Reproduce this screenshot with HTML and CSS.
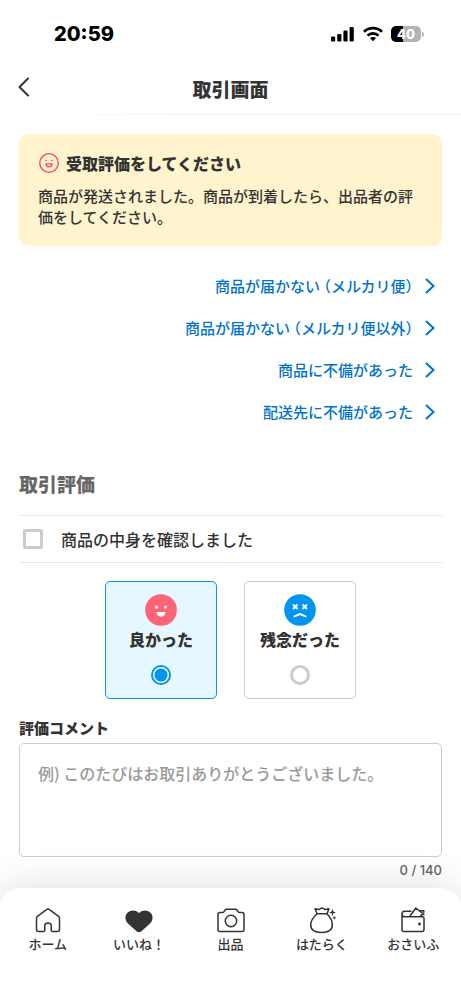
FILE: index.html
```html
<!DOCTYPE html>
<html lang="ja">
<head>
<meta charset="utf-8">
<meta name="viewport" content="width=device-width, initial-scale=1">
<title>取引画面</title>
<link rel="stylesheet" href="styles.css">
</head>
<body>
<div class="status">
  <span class="clock">20:59</span>
  <div class="status-icons">
    <svg width="24" height="16" viewBox="0 0 24 16" aria-hidden="true"><rect x="0" y="10.500" width="4.200" height="5" rx="1.200"/><rect x="6.200" y="8" width="4.200" height="7.500" rx="1.200"/><rect x="12.400" y="4.500" width="4.200" height="11" rx="1.200"/><rect x="18.600" y="1" width="4.200" height="14.500" rx="1.200"/></svg>
    <svg width="20" height="16" viewBox="0 0 20 16" fill="none" stroke="#000" stroke-width="2.700" aria-hidden="true"><path d="M1 5.800C6 .9 14 .9 19 5.800"/><path d="M4.500 9.600C7.700 6.500 12.300 6.500 15.500 9.600"/><path d="M10 15.200 6.900 12C8.700 10.500 11.300 10.500 13.100 12Z" fill="#000" stroke="none"/></svg>
    <div class="battery"><span class="battery-level">40</span></div>
  </div>
</div>
<header class="header">
  <button class="back" aria-label="戻る"><svg width="12" height="20" viewBox="0 0 12 20" fill="none" stroke="#333" stroke-width="2" stroke-linecap="round" stroke-linejoin="round"><path d="M10 1.500 1.500 10l8.500 8.500"/></svg></button>
  <h1>取引画面</h1>
</header>
<main>
  <section class="notice">
    <h2>
      <svg width="22" height="22" viewBox="0 0 22 22" fill="none" stroke="#ff4156" aria-hidden="true"><circle cx="11" cy="11" r="9.300" stroke-width="1.300"/><path d="M8 8.500h.1M14 8.500h.1" stroke-width="1.600" stroke-linecap="round"/><path d="M8 11.800h6c0 4-6 4-6 0Z" stroke-width="1.300" stroke-linejoin="round"/></svg>
      受取評価をしてください
    </h2>
    <p>商品が発送されました。商品が到着したら、出品者の評価をしてください。</p>
  </section>
  <nav class="links" aria-label="お困りのとき">
    <a href="#">商品が届かない （メルカリ便）<svg class="chevron" viewBox="0 0 10 16"><path d="M1 1l7.500 7L1 15"/></svg></a>
    <a href="#">商品が届かない （メルカリ便以外）<svg class="chevron" viewBox="0 0 10 16"><path d="M1 1l7.500 7L1 15"/></svg></a>
    <a href="#">商品に不備があった<svg class="chevron" viewBox="0 0 10 16"><path d="M1 1l7.500 7L1 15"/></svg></a>
    <a href="#">配送先に不備があった<svg class="chevron" viewBox="0 0 10 16"><path d="M1 1l7.500 7L1 15"/></svg></a>
  </nav>
  <form>
    <h2 class="section-title">取引評価</h2>
    <label class="confirm"><input type="checkbox">商品の中身を確認しました</label>
    <div class="ratings">
      <label class="rating">
        <svg width="32" height="32" viewBox="0 0 32 32" aria-hidden="true"><circle cx="16" cy="16" r="15.800" fill="#ff6376"/><circle cx="11.500" cy="13.300" r="1.500" fill="#fff"/><circle cx="20.500" cy="13.300" r="1.500" fill="#fff"/><path d="M11.500 18h9c0 6.200-9 6.200-9 0Z" fill="#fff"/></svg>
        良かった
        <input type="radio" name="rating" value="good" checked>
      </label>
      <label class="rating">
        <svg width="32" height="32" viewBox="0 0 32 32" fill="none" stroke="#fff" stroke-width="2" aria-hidden="true"><circle cx="16" cy="16" r="15.800" fill="#0095ee" stroke="none"/><path d="M9 10.500l4.500 4.500m0-4.500L9 15M18.500 10.500 23 15m0-4.500L18.500 15"/><path d="M10.500 22.300 16 20l5.500 2.300" stroke-linecap="round" stroke-linejoin="round"/></svg>
        残念だった
        <input type="radio" name="rating" value="bad">
      </label>
    </div>
    <label class="comment-label" for="comment">評価コメント</label>
    <textarea id="comment" maxlength="140" placeholder="例) このたびはお取引ありがとうございました。"></textarea>
    <p class="counter">0 / 140</p>
  </form>
</main>
<nav class="tabs" aria-label="メイン">
  <a href="#"><svg viewBox="0 0 28 28"><path d="M4.500 25.500c-1 0-2-1-2-2V12.500c0-1 .4-1.700 1.200-2.300l8.800-6.500c1-.8 2-.8 3 0l8.800 6.500c.8.6 1.200 1.300 1.200 2.300v11c0 1-1 2-2 2h-5c-.8 0-1.300-.5-1.300-1.300V20c0-4-6.400-4-6.400 0v4.200c0 .8-.5 1.300-1.300 1.300Z"/></svg>ホーム</a>
  <a href="#"><svg viewBox="0 0 28 28"><path class="solid" d="M14 7C10 3 4.500 4.200 2 7.300C-.5 10.500.2 15 3 17.500L11.500 25.300Q14 27.300 16.500 25.300L25 17.500C27.800 15 28.500 10.500 26 7.300C23.500 4.200 18 3 14 7Z"/></svg>いいね！</a>
  <a href="#"><svg viewBox="0 0 28 28"><path d="M3 25.500c-1 0-2-1-2-2V8.500c0-1 .7-2 2-2h2.500c.6 0 1-.2 1.300-.7L8 4c.4-.6.8-.8 1.500-.8h9c.7 0 1.100.2 1.500.8l1.200 1.800c.3.500.7.700 1.300.7H25c1.300 0 2 1 2 2v15c0 1-1 2-2 2Z"/><circle cx="14" cy="15" r="5.700"/></svg>出品</a>
  <a href="#"><svg viewBox="0 0 28 28"><path d="M9 7.800 7 2.800l3.800.8L14 1.800l3.200 1.800 3.800-.8-2 5Z"/><path d="M9 7.800C5 11.500 2.700 15 2.700 18.800c0 5 4 7.700 10.800 7.700S24.300 23.800 24.300 18.800c0-3.800-2-7.500-5.300-11"/><path class="fill" d="M24.500 2.800l.9 2.700 2.600.9-2.600.9-.9 2.700-.9-2.700-2.600-.9 2.600-.9ZM26.300 9.800l.6 1.400 1.400.6-1.400.6-.6 1.400-.6-1.400-1.400-.6 1.400-.6Z"/></svg>はたらく</a>
  <a href="#"><svg viewBox="0 0 28 28"><path d="M12 5.200H5.500c-3.300 0-3.300 5.500 0 5.500h5M3 8v15.500c0 1 .8 2 2 2h18c1 0 2-.8 2-2V12.200c0-1-.5-1.500-1.500-1.500h-2.300M10.500 10.700 16.800 2 25 8.500c-2-.3-3.300.5-3.800 2.200H10.500M20 4.700h4.800v1.500"/><circle class="fill" cx="20.500" cy="18" r="1.400"/></svg>おさいふ</a>
</nav>
</body>
</html>
```
FILE: styles.css
```css
* { box-sizing: border-box; }
body {
  margin: 0;
  min-height: 100vh;
  display: flex;
  flex-direction: column;
  background: #fff;
  color: #333;
  font-family: "Noto Sans CJK JP", sans-serif;
  font-size: 15px;
  font-weight: 500;
  overflow-x: hidden;
}
h1, h2, p { margin: 0; }
h1, h2 { font-weight: 900; }
a { color: inherit; text-decoration: none; }
.status {
  height: 64px;
  padding: 4px 40px 0 54px;
  display: flex;
  align-items: center;
  justify-content: space-between;
}
.clock {
  font: 800 20px/24px Inter, sans-serif;
  color: #000;
}
.status-icons { display: flex; align-items: center; gap: 8px; }
.battery {
  position: relative;
  width: 30px;
  height: 16px;
  border-radius: 5px;
  background: linear-gradient(90deg, #000 40%, #b3b3b3 40%);
}
.battery::after {
  content: "";
  position: absolute;
  left: 31px;
  top: 6px;
  width: 2px;
  height: 5px;
  border-radius: 0 2px 2px 0;
  background: #b3b3b3;
}
.battery-level {
  display: block;
  text-align: center;
  font: 800 13px/16px Inter, sans-serif;
  color: #fff;
}
.header {
  height: 51px;
  padding: 0 18px;
  display: grid;
  grid-template-columns: 24px 1fr 24px;
  align-items: center;
  border-bottom: 1px solid;
  border-image: linear-gradient(90deg, #fff 12%, #efefef 40%) 1;
}
.header h1 { font-size: 19px; line-height: 28px; text-align: center; }
.back { display: flex; padding: 0 0 4px; border: 0; background: none; }
main { flex: 1; padding: 19px 19px 9px; }
.notice {
  padding: 18px 19px 19px;
  border-radius: 9px;
  background: #fff4ce;
}
.notice h2 {
  display: flex;
  align-items: center;
  gap: 6px;
  margin-bottom: 11px;
  font-size: 16px;
  line-height: 22px;
}
.notice p { line-height: 21px; }
.links {
  margin-top: 19px;
  padding-right: 7px;
  display: flex;
  flex-direction: column;
  align-items: flex-end;
  color: #0073cc;
  font-feature-settings: "halt";
}
.links a {
  display: flex;
  align-items: center;
  gap: 12px;
  line-height: 42px;
}
.chevron {
  width: 10px;
  height: 16px;
  fill: none;
  stroke: currentColor;
  stroke-width: 2;
}
.section-title {
  margin: 37px 0 17px;
  font-size: 19px;
  line-height: 28px;
  color: #666;
}
.confirm {
  height: 48px;
  padding-left: 4px;
  display: flex;
  align-items: center;
  gap: 18px;
  border: solid #e8e8e8;
  border-width: 1px 0;
  font-size: 16px;
}
input { appearance: none; width: 20px; height: 20px; margin: 0; border: 3px solid #ccc; background: #fff; }
input[type="checkbox"] { border-radius: 2px; }
input[type="radio"] { border-radius: 50%; }
input[type="radio"]:checked {
  border: 2px solid #0095ee;
  background: radial-gradient(circle, #0095ee 6px, #fff 7px);
}
.ratings {
  margin: 18px 0;
  display: flex;
  justify-content: center;
  gap: 27px;
}
.rating {
  width: 112px;
  padding: 12px 0 13px;
  display: flex;
  flex-direction: column;
  align-items: center;
  border: 1px solid #ccc;
  border-radius: 5px;
  font-size: 16px;
  font-weight: 900;
  line-height: 26px;
}
.rating input { margin-top: 13px; }
.rating:has(:checked) { border-color: #0095ee; background: #e6f7ff; }
.comment-label { display: block; margin-bottom: 4px; font-weight: 900; line-height: 22px; }
textarea {
  display: block;
  width: 100%;
  height: 114px;
  padding: 18px;
  border: 1px solid #ccc;
  border-radius: 5px;
  background: transparent;
  color: inherit;
  font: inherit;
  font-size: 16px;
  line-height: 22px;
  resize: none;
}
textarea::placeholder { color: #999; }
.counter {
  margin-top: 4px;
  text-align: right;
  font: 500 13px/18px Inter, sans-serif;
  color: #666;
}
.tabs {
  height: 111px;
  padding: 18px 2px 0;
  display: flex;
  border-radius: 20px 20px 0 0;
  background: #fff;
  box-shadow: 0 0 40px rgba(0, 0, 0, .14);
}
.tabs a {
  flex: 1;
  display: flex;
  flex-direction: column;
  align-items: center;
  font-size: 13px;
  line-height: 20px;
}
.tabs svg {
  width: 28px;
  height: 28px;
  fill: none;
  stroke: #333;
  stroke-width: 1.5px;
  stroke-linejoin: round;
  stroke-linecap: round;
}
.tabs .solid, .tabs .fill { fill: #333; stroke: none; }
```
